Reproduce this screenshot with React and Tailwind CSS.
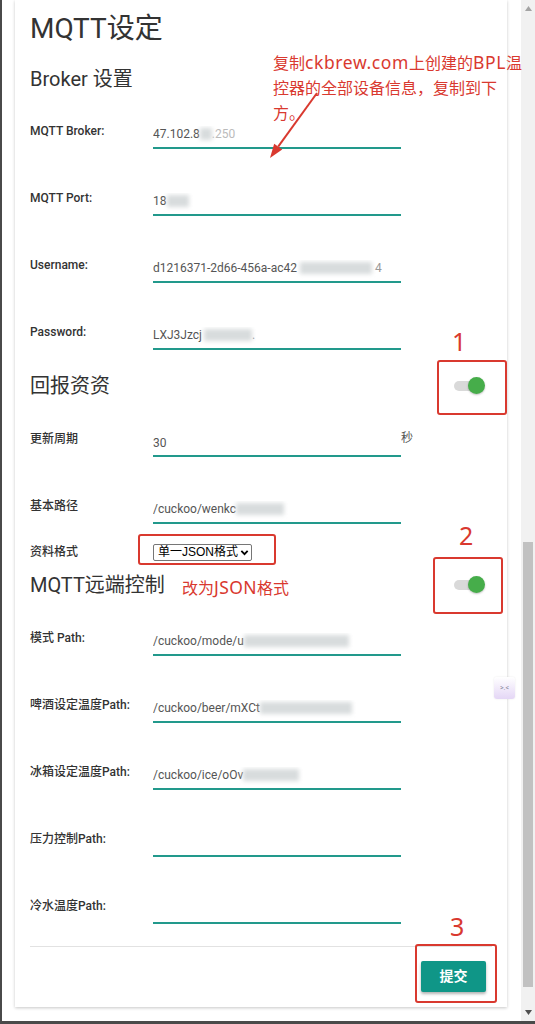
import React from "react";

const FONT = { fontFamily: 'Roboto, "Noto Sans CJK SC", sans-serif' };
const ANNO = { fontFamily: '"Noto Sans", "Noto Sans CJK SC", sans-serif' };
const SEL = { fontFamily: '"Liberation Sans", "Noto Sans CJK SC", sans-serif' };

function Row({ label, children, suffix, className = "" }) {
  return (
    <div className={`flex items-start h-[26px] ${className}`}>
      <div className="w-[123px] shrink-0 text-[12px] leading-[16px] font-medium text-[#333]">{label}</div>
      <div className="mt-[3px] w-[248px] h-[23px] border-b-2 border-[#22998c] pb-[5px] text-[12px] leading-[16px] text-[#555] whitespace-nowrap overflow-hidden flex items-center">
        {children}
      </div>
      {suffix}
    </div>
  );
}

function Toggle() {
  return (
    <div className="relative w-[31px] h-[18px] mr-[7px] flex items-center">
      <div className="w-[25px] h-[10px] rounded-full bg-[#d9d9d9]" />
      <div className="absolute right-0 top-0 w-[17px] h-[17px] rounded-full bg-[#46ad4a] shadow-[0_1px_2px_rgba(0,0,0,0.25)]" />
    </div>
  );
}

function RedBox({ className }) {
  return <div className={`absolute border-2 border-[#d9392f] rounded-[3px] ${className}`} />;
}

export default function App() {
  return (
    <div className="relative w-[535px] h-[1024px] overflow-hidden bg-white flex" style={FONT}>
      <div className="w-[2px] shrink-0 bg-[#4a4a4a]" />
      <div className="flex-1 flex flex-col">
        <div className="flex flex-1 min-h-0">
          <div className="flex-1 pl-[13px]">
            <div className="w-[492px] bg-white shadow-[0_1px_3px_rgba(0,0,0,0.22)] px-[15px] pt-[13px] pb-[15px] flex flex-col">
              <h1 className="text-[28px] leading-[32px] text-[#333] font-normal">MQTT设定</h1>
              <h2 className="mt-[22px] text-[20px] leading-[24px] text-[#333] font-normal">Broker 设置</h2>

              <Row label="MQTT Broker:" className="mt-[32px]">
                <span>47.102.8</span>
                <span className="inline-block w-[12px] h-[12px] bg-[#d8dcdd] blur-[2px]" />
                <span className="text-[#bbb]">.250</span>
              </Row>
              <Row label="MQTT Port:" className="mt-[41px]">
                <span>18</span>
                <span className="inline-block w-[22px] h-[12px] bg-[#d8dcdd] blur-[2px]" />
              </Row>
              <Row label="Username:" className="mt-[41px]">
                <span>d1216371-2d66-456a-ac42</span>
                <span className="inline-block w-[72px] h-[12px] bg-[#d8dcdd] blur-[2px] ml-[3px]" />
                <span className="ml-[3px] text-[#999]">4</span>
              </Row>
              <Row label="Password:" className="mt-[41px]">
                <span>LXJ3Jzcj</span>
                <span className="inline-block w-[48px] h-[12px] bg-[#d8dcdd] blur-[2px] ml-[2px]" />
                <span className="text-[#999]">.</span>
              </Row>

              <div className="mt-[24px] h-[24px] flex items-center justify-between">
                <h2 className="text-[20px] leading-[24px] text-[#333] font-normal">回报资资</h2>
                <Toggle />
              </div>

              <Row
                label="更新周期"
                className="mt-[33px]"
                suffix={<div className="text-[12px] leading-[16px] text-[#555] mt-[-1px]">秒</div>}
              >
                <span className="mt-[2px]">30</span>
              </Row>
              <Row label="基本路径" className="mt-[41px]">
                <span>/cuckoo/wenkc</span>
                <span className="inline-block w-[48px] h-[12px] bg-[#d8dcdd] blur-[2px]" />
              </Row>

              <div className="mt-[20px] flex items-center h-[16px]">
                <div className="w-[123px] shrink-0 text-[12px] leading-[16px] font-medium text-[#333]">资料格式</div>
                <div
                  className="w-[99px] h-[17px] border border-[#767676] rounded-[2px] bg-white flex items-center pl-[4px] pr-[3px] text-[12px] leading-[14px] text-black whitespace-nowrap"
                  style={SEL}
                >
                  <span>单一JSON格式</span>
                  <svg width="9" height="9" viewBox="0 0 10 10" className="ml-[2px] shrink-0">
                    <path d="M1.5 3.2 L5 6.8 L8.5 3.2" stroke="#000" strokeWidth="2" fill="none" />
                  </svg>
                </div>
              </div>

              <div className="mt-[13px] h-[24px] flex items-center justify-between">
                <h2 className="text-[20px] leading-[24px] text-[#333] font-normal">MQTT远端控制</h2>
                <Toggle />
              </div>

              <Row label="模式 Path:" className="mt-[33px]">
                <span>/cuckoo/mode/u</span>
                <span className="inline-block w-[105px] h-[12px] bg-[#d8dcdd] blur-[2px]" />
              </Row>
              <Row label="啤酒设定温度Path:" className="mt-[41px]">
                <span>/cuckoo/beer/mXCt</span>
                <span className="inline-block w-[92px] h-[12px] bg-[#d8dcdd] blur-[2px]" />
              </Row>
              <Row label="冰箱设定温度Path:" className="mt-[41px]">
                <span>/cuckoo/ice/oOv</span>
                <span className="inline-block w-[56px] h-[12px] bg-[#d8dcdd] blur-[2px]" />
              </Row>
              <Row label="压力控制Path:" className="mt-[41px]" />
              <Row label="冷水温度Path:" className="mt-[41px]" />

              <div className="mt-[22px] border-t border-[#e2e2e2]" />
              <div className="mt-[14px] flex justify-end">
                <button className="mr-[6px] w-[65px] h-[31px] bg-[#0f9687] text-white text-[14px] font-bold rounded-[2px] shadow-[0_2px_3px_rgba(0,0,0,0.3)]">
                  提交
                </button>
              </div>
            </div>
          </div>
          <div className="w-[14px] shrink-0 bg-[#f1f1f1] flex flex-col">
            <div className="h-[17px] flex items-center justify-center">
              <svg width="7" height="5" viewBox="0 0 7 5"><path d="M0 5 L3.5 0 L7 5 Z" fill="#a3a3a3" /></svg>
            </div>
            <div className="flex-1 flex flex-col">
              <div className="mt-[525px] mx-[2px] h-[445px] bg-[#c1c1c1]" />
            </div>
            <div className="h-[17px] flex items-center justify-center">
              <svg width="7" height="5" viewBox="0 0 7 5"><path d="M0 0 L3.5 5 L7 0 Z" fill="#505050" /></svg>
            </div>
          </div>
        </div>
        <div className="h-[3px] shrink-0 bg-[#4a4a4a]" />
      </div>

      {/* Annotations */}
      <div className="absolute left-[273px] top-[50px] text-[16px] leading-[25px] text-[#d9392f] whitespace-nowrap" style={ANNO}>
        复制<span className="text-[17.5px] tracking-[0.6px]">ckbrew.com</span>上创建的<span className="text-[17.5px] tracking-[0.6px]">BPL</span>温<br />
        控器的全部设备信息，复制到下<br />方。
      </div>
      <svg className="absolute left-[260px] top-[85px]" width="70" height="80" viewBox="0 0 70 80">
        <line x1="57" y1="8" x2="18.2" y2="61.7" stroke="#d9392f" strokeWidth="2" />
        <path d="M10 73 L22.25 64.6 L14.15 58.8 Z" fill="#d9392f" />
      </svg>

      <div className="absolute left-[452px] top-[329px] text-[25px] leading-[25px] text-[#d9392f]" style={ANNO}>1</div>
      <RedBox className="left-[437px] top-[360px] w-[70px] h-[55px]" />

      <RedBox className="left-[138px] top-[534px] w-[138px] h-[31px]" />
      <div className="absolute left-[459px] top-[523px] text-[25px] leading-[25px] text-[#d9392f]" style={ANNO}>2</div>
      <RedBox className="left-[433px] top-[557px] w-[70px] h-[57px]" />
      <div className="absolute left-[182px] top-[575px] text-[16px] leading-[24px] text-[#d9392f] whitespace-nowrap" style={ANNO}>
        改为<span className="text-[17.5px] tracking-[0.4px]">JSON</span>格式
      </div>

      <div className="absolute left-[450px] top-[914px] text-[25px] leading-[25px] text-[#d9392f]" style={ANNO}>3</div>
      <RedBox className="left-[415px] top-[944px] w-[82px] h-[59px]" />

      <div className="absolute left-[494px] top-[677px] w-[21px] h-[22px] rounded-[3px] bg-gradient-to-b from-white to-[#e4d6f5] shadow-[0_0_2px_rgba(0,0,0,0.1)] flex items-center justify-center text-[7px] leading-[8px] text-[#8a8a9a]">
        &gt;.&lt;
      </div>
    </div>
  );
}
